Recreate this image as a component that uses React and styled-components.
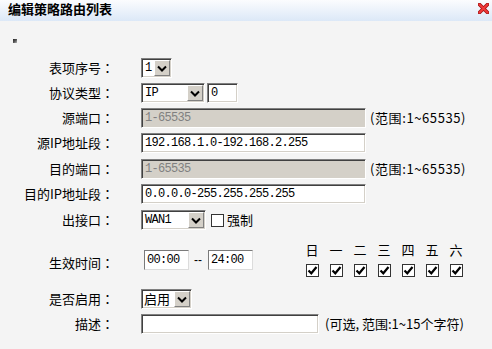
import React from 'react';
import styled, { createGlobalStyle } from 'styled-components';

const Global = createGlobalStyle`
  html, body { margin: 0; padding: 0; background: #f4f4f4; }
  body {
    font-family: "Noto Sans CJK SC", "Noto Sans", sans-serif;
    font-size: 13px;
    color: #000;
  }
`;

const Page = styled.div`
  width: 492px;
  height: 349px;
  background: #f4f4f4;
  overflow: hidden;
`;

const TitleBar = styled.div`
  height: 21px;
  background: linear-gradient(#fbfcfe, #dce8f7);
  display: flex;
  justify-content: space-between;
  align-items: flex-start;
`;

const Title = styled.h1`
  margin: 0;
  padding-left: 8px;
  font-size: 13px;
  line-height: 17px;
  font-weight: 700;
  color: #000;
`;

const CloseIcon = styled.svg`
  display: block;
  margin: 3px 3px 0 0;
`;

const Marker = styled.span`
  display: block;
  width: 4px;
  height: 4px;
  margin: 18px 0 0 13px;
  background: linear-gradient(135deg, #222 0%, #555 50%, #bbb 100%);
`;

const Form = styled.div`
  display: flex;
  flex-direction: column;
`;

const Row = styled.div`
  display: flex;
  align-items: center;
  margin-top: ${p => p.$mt}px;
`;

const Label = styled.span`
  width: 114px;
  margin-right: 27px;
  flex: none;
  text-align: right;
  white-space: nowrap;
  line-height: 20px;
  margin-top: ${p => p.$shift || 0}px;
`;

const Colon = styled.span`
  font-family: "Noto Sans CJK TC", sans-serif;
`;

const Controls = styled.div`
  display: flex;
  align-items: center;
  gap: ${p => p.$gap || 0}px;
`;

const Field = styled.input`
  box-sizing: border-box;
  width: ${p => p.$w}px;
  height: 20px;
  margin: 0;
  padding: 0 3px;
  border: 1px solid;
  border-color: #808080 #ffffff #ffffff #808080;
  box-shadow: inset 1px 1px 0 #404040, inset -1px -1px 0 #d4d0c8;
  background: ${p => (p.disabled ? '#d4d0c8' : '#ffffff')};
  color: ${p => (p.disabled ? '#808080' : '#000000')};
  font: 12px "Liberation Mono", monospace;
  letter-spacing: -0.7px;
  outline: none;
`;

const TimeField = styled(Field)`
  padding: 0 2px;
  border-color: #7a7a7a #dcdcdc #dcdcdc #7a7a7a;
  box-shadow: none;
`;

const Dash = styled.span`
  margin: 0 6px 0 5px;
  font: 12px "Liberation Sans", sans-serif;
  line-height: 20px;
`;

const Note = styled.span`
  margin-left: ${p => p.$ml}px;
  white-space: nowrap;
  line-height: 20px;
  letter-spacing: ${p => p.$ls || 0}px;
`;

const SelectBox = styled.div`
  box-sizing: border-box;
  width: ${p => p.$w}px;
  height: 20px;
  display: flex;
  align-items: stretch;
  padding: 1px;
  border: 1px solid;
  border-color: #808080 #ffffff #ffffff #808080;
  box-shadow: inset 1px 1px 0 #404040, inset -1px -1px 0 #d4d0c8;
  background: #fff;
`;

const SelectValue = styled.span`
  flex: 1;
  padding-left: ${p => (p.$sans ? 1 : 2)}px;
  line-height: 16px;
  white-space: nowrap;
  font: ${p => (p.$sans ? '13px/16px "Noto Sans CJK SC", sans-serif' : '12px/16px "Liberation Mono", monospace')};
  letter-spacing: ${p => (p.$sans ? 0 : -0.7)}px;
`;

const SelectArrow = styled.span`
  box-sizing: border-box;
  width: 16px;
  flex: none;
  display: flex;
  align-items: center;
  justify-content: center;
  background: #d4d0c8;
  border: 1px solid;
  border-color: #ffffff #808080 #808080 #ffffff;
`;

const Check = styled.span`
  box-sizing: border-box;
  display: flex;
  align-items: center;
  justify-content: center;
  width: 13px;
  height: 13px;
  background: #fff;
  border: 1px solid #333;
`;

const CheckText = styled.span`
  margin-left: 3px;
  line-height: 20px;
`;

const TimeControls = styled.div`
  display: flex;
  align-items: center;
  width: 159px;
  padding-left: 3px;
  box-sizing: border-box;
`;

const DayGrid = styled.div`
  display: grid;
  grid-template-columns: repeat(7, 24px);
  row-gap: 8px;
  justify-items: center;
`;

const DayHead = styled.span`
  line-height: 13px;
  font-size: 13px;
`;

const Chevron = () => (
  <svg width="10" height="7" viewBox="0 0 10 7">
    <path d="M1 1.5 L5 5.5 L9 1.5" fill="none" stroke="#000" strokeWidth="2" />
  </svg>
);

const Select = ({ w, value, sans }) => (
  <SelectBox $w={w}>
    <SelectValue $sans={sans}>{value}</SelectValue>
    <SelectArrow>
      <Chevron />
    </SelectArrow>
  </SelectBox>
);

const CheckBox = ({ checked }) => (
  <Check>
    {checked && (
      <svg width="11" height="11" viewBox="0 0 11 11">
        <path d="M1.5 5.5 L4.3 8.3 L9.5 2" fill="none" stroke="#000" strokeWidth="2.2" />
      </svg>
    )}
  </Check>
);

const FieldLabel = ({ children, shift }) => (
  <Label $shift={shift}>
    {children}
    <Colon>：</Colon>
  </Label>
);

const days = ['日', '一', '二', '三', '四', '五', '六'];

export default function App() {
  return (
    <Page>
      <Global />
      <TitleBar>
        <Title>编辑策略路由列表</Title>
        <CloseIcon width="11" height="11" viewBox="0 0 11 11">
          <path d="M1.5 1.5 L9.5 9.5 M9.5 1.5 L1.5 9.5" stroke="#a31010" strokeWidth="3.6" strokeLinecap="round" />
          <path d="M1.5 1.5 L9.5 9.5 M9.5 1.5 L1.5 9.5" stroke="#f03a3a" strokeWidth="2" strokeLinecap="round" />
        </CloseIcon>
      </TitleBar>
      <Marker />
      <Form>
        <Row $mt={15}>
          <FieldLabel>表项序号</FieldLabel>
          <Select w={31} value="1" />
        </Row>
        <Row $mt={5}>
          <FieldLabel>协议类型</FieldLabel>
          <Controls $gap={2}>
            <Select w={64} value="IP" />
            <Field $w={31} defaultValue="0" />
          </Controls>
        </Row>
        <Row $mt={5}>
          <FieldLabel>源端口</FieldLabel>
          <Controls>
            <Field $w={225} disabled defaultValue="1-65535" />
            <Note $ml={4} $ls={0.6}>(范围:1~65535)</Note>
          </Controls>
        </Row>
        <Row $mt={5}>
          <FieldLabel>源IP地址段</FieldLabel>
          <Field $w={225} defaultValue="192.168.1.0-192.168.2.255" />
        </Row>
        <Row $mt={6}>
          <FieldLabel>目的端口</FieldLabel>
          <Controls>
            <Field $w={225} disabled defaultValue="1-65535" />
            <Note $ml={4} $ls={0.6}>(范围:1~65535)</Note>
          </Controls>
        </Row>
        <Row $mt={5}>
          <FieldLabel>目的IP地址段</FieldLabel>
          <Field $w={225} defaultValue="0.0.0.0-255.255.255.255" />
        </Row>
        <Row $mt={6}>
          <FieldLabel>出接口</FieldLabel>
          <Controls $gap={5}>
            <Select w={65} value="WAN1" />
            <Controls>
              <CheckBox />
              <CheckText>强制</CheckText>
            </Controls>
          </Controls>
        </Row>
        <Row $mt={13}>
          <FieldLabel shift={6}>生效时间</FieldLabel>
          <TimeControls>
            <TimeField $w={45} defaultValue="00:00" />
            <Dash>--</Dash>
            <TimeField $w={45} defaultValue="24:00" />
          </TimeControls>
          <DayGrid>
            {days.map(d => (
              <DayHead key={d}>{d}</DayHead>
            ))}
            {days.map(d => (
              <CheckBox key={'c' + d} checked />
            ))}
          </DayGrid>
        </Row>
        <Row $mt={12}>
          <FieldLabel>是否启用</FieldLabel>
          <Select w={51} value="启用" sans />
        </Row>
        <Row $mt={5}>
          <FieldLabel>描述</FieldLabel>
          <Controls>
            <Field $w={178} defaultValue="" />
            <Note $ml={6}>(可选, 范围:1~15个字符)</Note>
          </Controls>
        </Row>
      </Form>
    </Page>
  );
}
